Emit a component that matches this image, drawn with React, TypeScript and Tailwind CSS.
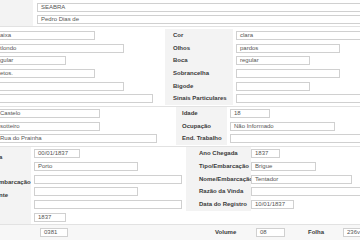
const font = { fontFamily: '"Liberation Sans", Arial, sans-serif' };

function Field({ w, v }: { w: string; v?: string }) {
  return (
    <div
      className={`${w} h-[9px] shrink-0 border border-[#d0d0d0] bg-white pl-[3px] text-[6px] leading-[7px] text-[#555] whitespace-nowrap overflow-hidden`}
    >
      {v}
    </div>
  );
}

function Label({ t }: { t: string }) {
  return <span className="text-[6px] leading-[9px] font-bold text-[#3a3a3a] whitespace-nowrap">{t}</span>;
}

const sinais = [
  { a: 'aixa', aw: 'w-[99px]', l: 'Cor', b: 'clara', bw: 'w-[140px]' },
  { a: 'tlondo', aw: 'w-[128px]', l: 'Olhos', b: 'pardos', bw: 'w-[104px]' },
  { a: 'gular', aw: 'w-[70px]', l: 'Boca', b: 'regular', bw: 'w-[74px]' },
  { a: 'etos.', aw: 'w-[99px]', l: 'Sobrancelha', b: '', bw: 'w-[104px]' },
  { a: '', aw: 'w-[128px]', l: 'Bigode', b: '', bw: 'w-[74px]' },
  { a: '', aw: 'w-[157px]', l: 'Sinais Particulares', b: '', bw: 'w-[140px]' },
];

const residencia = [
  { a: 'Castelo', aw: 'w-[104px]', l: 'Idade', b: '18', bw: 'w-[40px]' },
  { a: 'sotteiro', aw: 'w-[104px]', l: 'Ocupação', b: 'Não Informado', bw: 'w-[105px]' },
  { a: 'Rua do Prainha', aw: 'w-[161px]', l: 'End. Trabalho', b: '', bw: 'w-[140px]' },
];

const chegada = [
  { la: 'a', a: '00/01/1837', aw: 'w-[46px]', l: 'Ano Chegada', b: '1837', bw: 'w-[29px]' },
  { la: '', a: 'Porto', aw: 'w-[104px]', l: 'Tipo/Embarcação', b: 'Brigue', bw: 'w-[65px]' },
  { la: 'mbarcação', a: '', aw: 'w-[148px]', l: 'Nome/Embarcação', b: 'Tentador', bw: 'w-[101px]' },
  { la: 'nte', a: '', aw: 'w-[104px]', l: 'Razão da Vinda', b: '', bw: 'w-[120px]' },
  { la: '', a: '', aw: 'w-[148px]', l: 'Data do Registro', b: '10/01/1837', bw: 'w-[43px]' },
];

export default function App() {
  return (
    <div style={font} className="w-[360px] h-[240px] overflow-hidden bg-white">
      {/* nome */}
      <div className="flex h-[27px] border-b border-[#e2e2e2]">
        <div className="w-[33px] shrink-0 bg-[#f3f3f3]" />
        <div className="flex-1 pl-[4px] pt-[3px] flex flex-col gap-[3px]">
          <Field w="w-[340px]" v="SEABRA" />
          <Field w="w-[340px]" v="Pedro Dias de" />
        </div>
      </div>

      {/* sinais */}
      <div className="flex flex-col pt-[2px] pb-[1px] border-b border-[#e2e2e2]">
        {sinais.map((r, i) => (
          <div key={i} className="flex h-[12.7px]">
            <div className="w-[165px] shrink-0 flex items-center">
              <div className="-ml-[4px]">
                <Field w={r.aw} v={r.a} />
              </div>
            </div>
            <div className="w-[68px] shrink-0 flex items-center pl-[8px] bg-[#f3f3f3]">
              <Label t={r.l} />
            </div>
            <div className="flex items-center pl-[3px]">
              <Field w={r.bw} v={r.b} />
            </div>
          </div>
        ))}
      </div>

      {/* residencia */}
      <div className="flex flex-col pb-[1px] border-b border-[#e2e2e2]">
        {residencia.map((r, i) => (
          <div key={i} className="flex h-[12.7px]">
            <div className="w-[176px] shrink-0 flex items-center">
              <div className="-ml-[4px]">
                <Field w={r.aw} v={r.a} />
              </div>
            </div>
            <div className="w-[51px] shrink-0 flex items-center pl-[6px] bg-[#f3f3f3]">
              <Label t={r.l} />
            </div>
            <div className="flex items-center pl-[3px]">
              <Field w={r.bw} v={r.b} />
            </div>
          </div>
        ))}
      </div>

      {/* chegada */}
      <div className="flex flex-col border-b border-[#e2e2e2]">
        {chegada.map((r, i) => (
          <div key={i} className="flex h-[12.8px]">
            <div className="w-[31px] shrink-0 flex items-center bg-[#f3f3f3] overflow-hidden">
              <div className="-ml-[1px]">
                <Label t={r.la} />
              </div>
            </div>
            <div className="w-[155px] shrink-0 flex items-center pl-[3px]">
              <Field w={r.aw} v={r.a} />
            </div>
            <div className="w-[65px] shrink-0 flex items-center pl-[13px] bg-[#f3f3f3]">
              <Label t={r.l} />
            </div>
            <div className="flex items-center">
              <Field w={r.bw} v={r.b} />
            </div>
          </div>
        ))}
        <div className="flex h-[12.8px]">
          <div className="w-[31px] shrink-0 bg-[#f3f3f3]" />
          <div className="flex items-center pl-[3px]">
            <Field w="w-[32px]" v="1837" />
          </div>
        </div>
      </div>

      {/* livro */}
      <div className="flex items-center h-[15px] bg-[#f7f7f7]">
        <div className="w-[215px] shrink-0 pl-[40px] flex items-center">
          <Field w="w-[28px]" v="0381" />
        </div>
        <div className="w-[41px] shrink-0 flex items-center">
          <Label t="Volume" />
        </div>
        <div className="w-[52px] shrink-0 flex items-center">
          <Field w="w-[29px]" v="08" />
        </div>
        <div className="w-[35px] shrink-0 flex items-center">
          <Label t="Folha" />
        </div>
        <Field w="w-[30px]" v="236v" />
      </div>
    </div>
  );
}
